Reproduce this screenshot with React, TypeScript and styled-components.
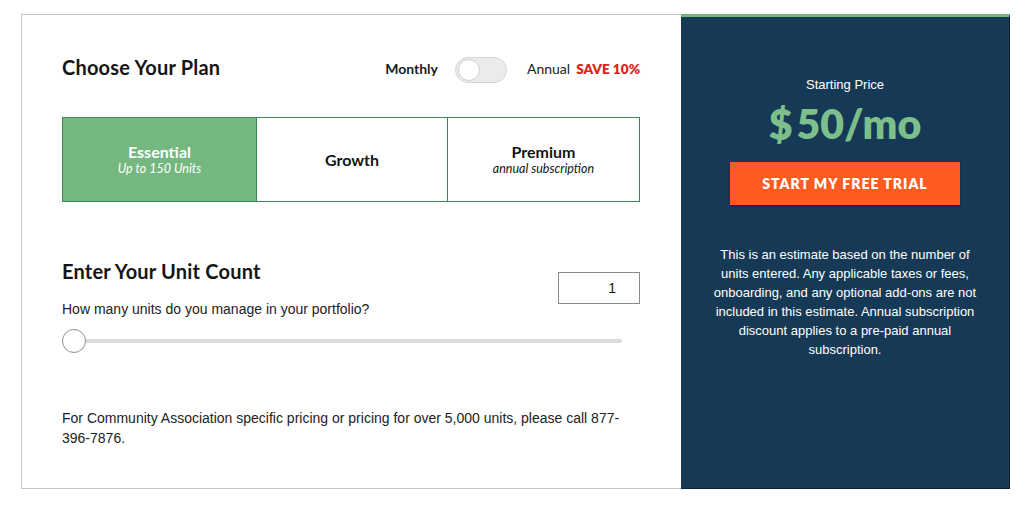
import React, { useState } from 'react'
import styled, { createGlobalStyle } from 'styled-components'

const GlobalStyle = createGlobalStyle`
  html, body {
    margin: 0;
    padding: 0;
    background: #ffffff;
  }
  body {
    font-family: "Liberation Sans", Arial, sans-serif;
    color: #1c1c1c;
  }
`

const heading = `"Lato", "Inter", "Liberation Sans", sans-serif`

const Wrapper = styled.div`
  display: flex;
  width: 989px;
  height: 475px;
  margin: 14px 0 0 21px;
  box-sizing: border-box;
`

const Calculator = styled.section`
  flex: 1;
  box-sizing: border-box;
  border: 1px solid #c6c6c6;
  border-right: none;
  padding: 42px 41px 0 40px;
  display: flex;
  flex-direction: column;
`

const HeaderRow = styled.div`
  display: flex;
  align-items: center;
  justify-content: space-between;
  height: 26px;
`

const Title = styled.h2<{ $lift?: number }>`
  margin: 0 0 ${p => p.$lift ?? 0}px;
  font-family: ${heading};
  font-size: 20px;
  font-weight: 700;
  line-height: 24px;
  letter-spacing: 0.2px;
  color: #151515;
`

const Billing = styled.div`
  display: flex;
  align-items: center;
`

const BillingLabel = styled.span<{ $bold?: boolean }>`
  font-family: ${heading};
  font-size: 14px;
  font-weight: ${p => (p.$bold ? 700 : 400)};
  line-height: 16px;
  margin-bottom: 3px;
  color: #1c1c1c;
`

const Save = styled.span`
  font-family: ${heading};
  font-size: 13.6px;
  font-weight: 800;
  line-height: 16px;
  margin: 0 0 3px 6px;
  color: #d8261c;
`

const Switch = styled.button<{ $on: boolean }>`
  position: relative;
  width: 52px;
  height: 26px;
  margin: 0 20px 0 17px;
  padding: 0;
  border: 1px solid #d4d4d4;
  border-radius: 13px;
  background: ${p => (p.$on ? '#74b77f' : '#ebebeb')};
  cursor: pointer;
  box-sizing: border-box;
`

const Knob = styled.span<{ $on: boolean }>`
  position: absolute;
  top: 1px;
  left: ${p => (p.$on ? '27px' : '2px')};
  width: 22px;
  height: 22px;
  border-radius: 50%;
  background: #ffffff;
  border: 1px solid #cfcfcf;
  box-sizing: border-box;
`

const Plans = styled.div`
  display: grid;
  grid-template-columns: 193px 191px 1fr;
  height: 85px;
  margin-top: 34px;
  border: 1px solid #3e8b57;
  box-sizing: border-box;
`

const Plan = styled.button<{ $active?: boolean }>`
  display: flex;
  flex-direction: column;
  align-items: center;
  justify-content: center;
  border: none;
  border-left: 1px solid #3e8b57;
  background: ${p => (p.$active ? '#74b77f' : '#ffffff')};
  color: ${p => (p.$active ? '#ffffff' : '#151515')};
  font-family: ${heading};
  cursor: pointer;
  padding: 0;

  &:first-child {
    border-left: none;
  }
`

const PlanName = styled.span`
  font-size: 16px;
  font-weight: 700;
  line-height: 18px;
`

const PlanNote = styled.span`
  font-size: 12.5px;
  font-style: italic;
  line-height: 15px;
`

const UnitRow = styled.div`
  display: flex;
  justify-content: space-between;
  align-items: flex-start;
  margin-top: 57px;
`

const UnitText = styled.div`
  display: flex;
  flex-direction: column;
`

const Question = styled.p`
  margin: 17px 0 0;
  font-size: 14px;
  line-height: 18px;
  color: #222;
`

const CountInput = styled.input`
  width: 82px;
  height: 32px;
  margin-top: 13px;
  box-sizing: border-box;
  border: 1px solid #8a8a8a;
  padding: 0 23px 0 0;
  text-align: right;
  font-family: "Liberation Sans", Arial, sans-serif;
  font-size: 14px;
  color: #111;
  outline: none;
`

const Slider = styled.div`
  position: relative;
  width: 560px;
  height: 24px;
  margin-top: 11px;
  display: flex;
  align-items: center;
`

const Track = styled.div`
  width: 100%;
  height: 4px;
  border-radius: 2px;
  background: #dcdcdc;
`

const Thumb = styled.div`
  position: absolute;
  top: 0;
  width: 24px;
  height: 24px;
  border-radius: 50%;
  background: #fff;
  border: 1px solid #8f8f8f;
  box-sizing: border-box;
`

const Footnote = styled.p`
  margin: 55px 0 0;
  font-size: 14px;
  line-height: 20px;
  color: #222;
  max-width: 560px;
`

const Summary = styled.aside`
  width: 329px;
  box-sizing: border-box;
  background: #163a56;
  border-top: 3px solid #74b77f;
  border-right: 1px solid #0b2235;
  border-bottom: 1px solid #0b2235;
  display: flex;
  flex-direction: column;
  align-items: center;
  padding-top: 60px;
  color: #ffffff;
`

const PriceLabel = styled.div`
  font-size: 13px;
  line-height: 16px;
`

const Price = styled.div`
  margin-top: 8px;
  font-family: ${heading};
  font-size: 41px;
  font-weight: 800;
  line-height: 46px;
  color: #7dbf8b;

  span {
    margin-right: 4px;
  }
`

const TrialButton = styled.button`
  width: 230px;
  height: 43px;
  margin-top: 15px;
  border: none;
  background: #ff5a1f;
  box-shadow: 0 1px 2px rgba(0, 0, 0, 0.35);
  color: #fff;
  font-family: ${heading};
  font-size: 14px;
  font-weight: 800;
  letter-spacing: 1px;
  cursor: pointer;
`

const Disclaimer = styled.p`
  margin: 40px 0 0;
  width: 270px;
  font-size: 13px;
  line-height: 19px;
  text-align: center;
`

const plans = [
  { name: 'Essential', note: 'Up to 150 Units' },
  { name: 'Growth', note: '' },
  { name: 'Premium', note: 'annual subscription' },
]

export default function App() {
  const [annual, setAnnual] = useState(false)
  const [plan, setPlan] = useState(0)
  const [units, setUnits] = useState('1')

  return (
    <>
      <GlobalStyle />
      <Wrapper>
        <Calculator>
          <HeaderRow>
            <Title $lift={7}>Choose Your Plan</Title>
            <Billing>
              <BillingLabel $bold>Monthly</BillingLabel>
              <Switch $on={annual} onClick={() => setAnnual(!annual)} aria-label="Billing period">
                <Knob $on={annual} />
              </Switch>
              <BillingLabel>Annual</BillingLabel>
              <Save>SAVE 10%</Save>
            </Billing>
          </HeaderRow>

          <Plans>
            {plans.map((p, i) => (
              <Plan key={p.name} $active={plan === i} onClick={() => setPlan(i)}>
                <PlanName>{p.name}</PlanName>
                {p.note && <PlanNote>{p.note}</PlanNote>}
              </Plan>
            ))}
          </Plans>

          <UnitRow>
            <UnitText>
              <Title>Enter Your Unit Count</Title>
              <Question>How many units do you manage in your portfolio?</Question>
            </UnitText>
            <CountInput value={units} onChange={e => setUnits(e.target.value)} />
          </UnitRow>

          <Slider>
            <Track />
            <Thumb style={{ left: 0 }} />
          </Slider>

          <Footnote>
            For Community Association specific pricing or pricing for over 5,000 units, please call 877-396-7876.
          </Footnote>
        </Calculator>

        <Summary>
          <PriceLabel>Starting Price</PriceLabel>
          <Price>
            <span>$</span>50/mo
          </Price>
          <TrialButton>START MY FREE TRIAL</TrialButton>
          <Disclaimer>
            This is an estimate based on the number of units entered. Any applicable taxes or fees,
            onboarding, and any optional add-ons are not included in this estimate. Annual subscription
            discount applies to a pre-paid annual subscription.
          </Disclaimer>
        </Summary>
      </Wrapper>
    </>
  )
}
